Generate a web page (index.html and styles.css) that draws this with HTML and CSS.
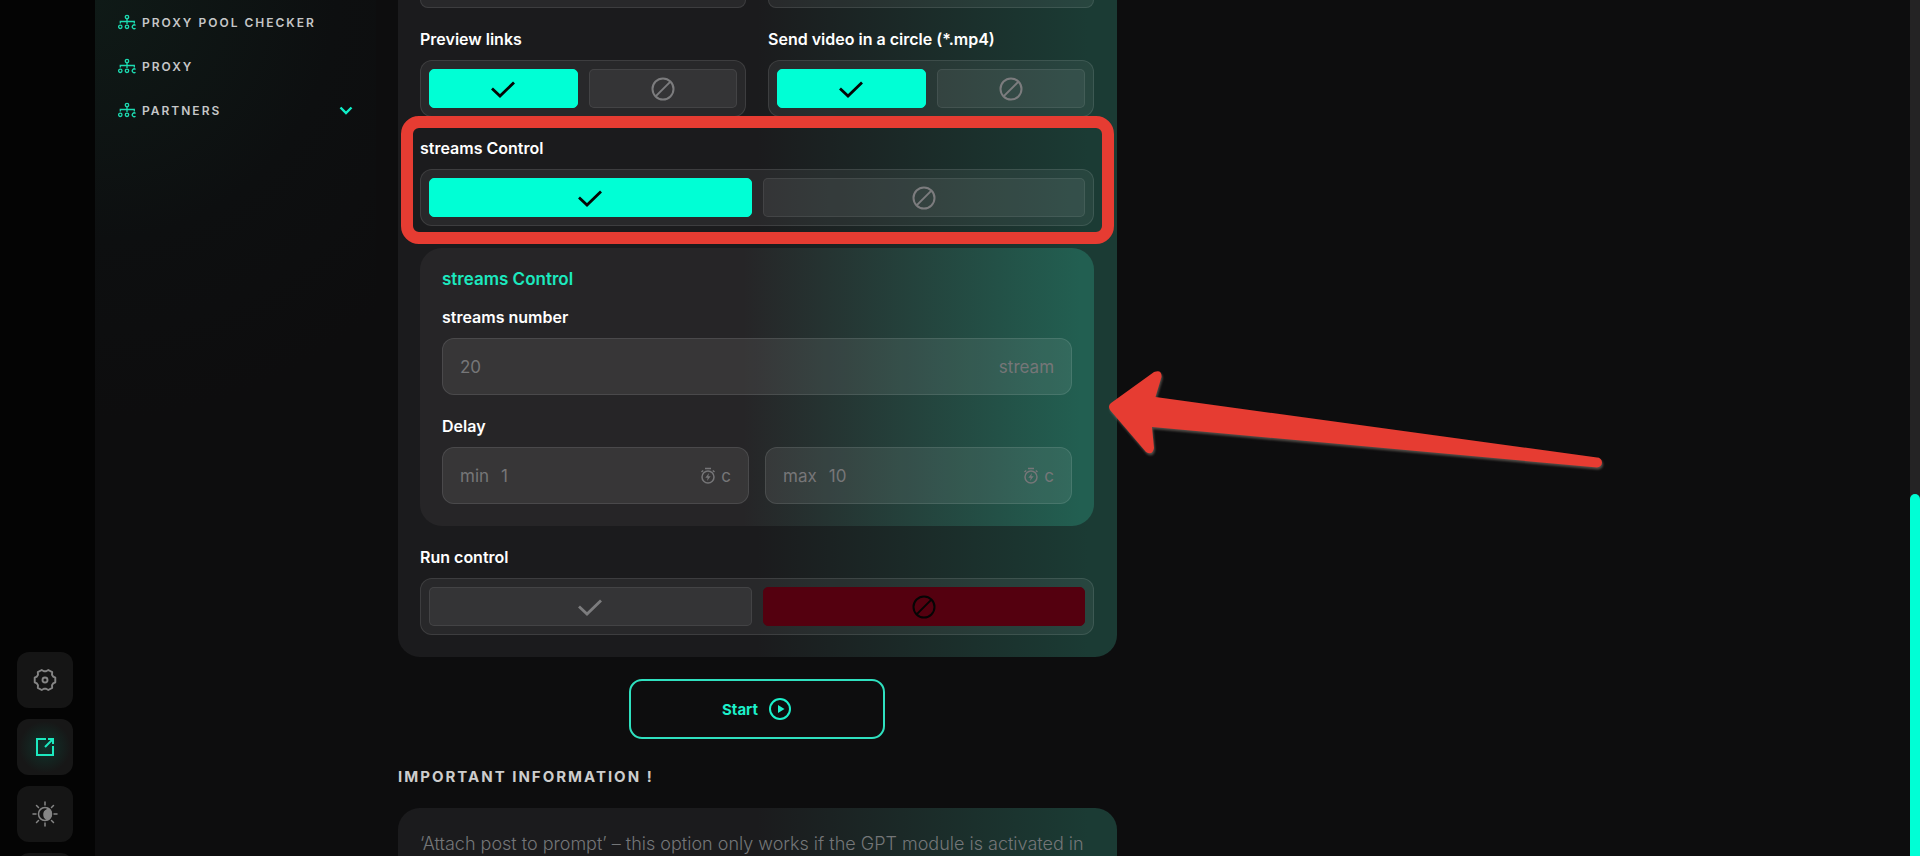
FILE: index.html
```html
<!DOCTYPE html>
<html lang="en">
<head>
<meta charset="utf-8">
<title>Streams Control</title>
<link rel="stylesheet" href="styles.css">
</head>
<body>
<svg class="sprite" aria-hidden="true">
  <symbol id="check" viewBox="0 0 24 24"><path d="M1 11.500l8 7.500L23 5.500" fill="none" stroke="currentColor" stroke-width="2.800"/></symbol>
  <symbol id="ban" viewBox="0 0 24 24"><g fill="none" stroke="currentColor" stroke-width="2"><circle cx="12" cy="12" r="10.500"/><path d="M4.600 19.400L19.400 4.600"/></g></symbol>
  <symbol id="tree" viewBox="0 0 18 16"><g fill="none" stroke="currentColor" stroke-width="1.300"><circle cx="9" cy="3" r="1.700"/><path d="M9 4.700V10M2.300 9.500V7.500h14V9.500"/><circle cx="2.300" cy="12.800" r="1.700"/><circle cx="9" cy="12.800" r="1.700"/><path d="M17.500 11.400a1.900 1.900 0 1 0 0 2.800"/></g></symbol>
  <symbol id="timer" viewBox="0 0 16 18"><g fill="none" stroke="currentColor" stroke-width="1.500"><circle cx="8" cy="10" r="6"/><path d="M5 1.500h6M1.500 5l1.700-1.500M14.500 5l-1.700-1.500"/></g><path d="M9 6L5.300 10.800h2.400L7 14l3.700-4.800H8.300z" fill="currentColor"/></symbol>
</svg>
<div class="app">
  <nav class="rail" aria-label="Tools">
    <button class="rail-button" aria-label="Settings"><svg width="24" height="24" viewBox="0 0 24 24" fill="none" stroke="currentColor" stroke-width="1.900" stroke-linejoin="round"><path d="M22.300 9.700V14.300L20.100 15.400L19 17.300L19.200 19.900L15.300 22L13.100 20.700H10.900L8.700 22L4.800 19.900L5 17.300L3.900 15.400L1.700 14.300V9.700L3.900 8.600L5 6.700L4.800 4.100L8.700 2L10.900 3.300H13.100L15.300 2L19.200 4.100L19 6.700L20.100 8.600z"/><circle cx="12" cy="12" r="2.500"/></svg></button>
    <button class="rail-button rail-active" aria-label="Open external"><svg width="20" height="20" viewBox="0 0 20 20" fill="none" stroke="currentColor" stroke-width="2"><path d="M11 2H2v16h16V9M13 2h5v5M18 2l-8 8"/></svg></button>
    <button class="rail-button" aria-label="Theme"><svg width="26" height="26" viewBox="0 0 26 26" fill="none" stroke="currentColor" stroke-width="1.500" stroke-linecap="round"><circle cx="13" cy="13" r="6.500"/><path d="M16 7.500a6.500 6.500 0 0 1 0 11a5 5 0 0 1-1-9.500z" fill="currentColor"/><path d="M13 1v3M13 22v3M1 13h3M22 13h3M4.500 4.500l2 2M19.500 19.500l2 2M4.500 21.500l2-2M19.500 6.500l2-2"/></svg></button>
    <button class="rail-button" aria-label="More"></button>
  </nav>
  <nav class="sidebar" aria-label="Main">
    <a class="nav-link" href="#pool"><svg width="18" height="16"><use href="#tree"/></svg>PROXY POOL CHECKER</a>
    <a class="nav-link" href="#proxy"><svg width="18" height="16"><use href="#tree"/></svg>PROXY</a>
    <a class="nav-link" href="#partners"><svg width="18" height="16"><use href="#tree"/></svg>PARTNERS<svg class="chevron" width="14" height="9" viewBox="0 0 14 9"><path d="M1.500 1.500L7 7l5.500-5.500" fill="none" stroke="currentColor" stroke-width="2.400"/></svg></a>
  </nav>
  <main class="main">
    <form class="column">
      <div class="card settings">
        <div class="pair">
          <div class="stub"></div>
          <div class="stub"></div>
        </div>
        <div class="pair">
          <div class="field" role="group" aria-labelledby="preview-label">
            <div class="label" id="preview-label">Preview links</div>
            <div class="toggle">
              <label class="option"><input type="radio" name="preview" aria-label="On" checked><svg><use href="#check"/></svg></label>
              <label class="option option-off"><input type="radio" name="preview" aria-label="Off"><svg><use href="#ban"/></svg></label>
            </div>
          </div>
          <div class="field" role="group" aria-labelledby="circle-label">
            <div class="label" id="circle-label">Send video in a circle (*.mp4)</div>
            <div class="toggle">
              <label class="option"><input type="radio" name="circle" aria-label="On" checked><svg><use href="#check"/></svg></label>
              <label class="option option-off"><input type="radio" name="circle" aria-label="Off"><svg><use href="#ban"/></svg></label>
            </div>
          </div>
        </div>
        <div class="field marked" role="group" aria-labelledby="streams-label">
          <div class="label" id="streams-label">streams Control</div>
          <div class="toggle">
            <label class="option"><input type="radio" name="streams" aria-label="On" checked><svg><use href="#check"/></svg></label>
            <label class="option option-off"><input type="radio" name="streams" aria-label="Off"><svg><use href="#ban"/></svg></label>
          </div>
        </div>
        <section class="panel">
          <h3 class="panel-title">streams Control</h3>
          <div class="field">
            <label class="label" for="count">streams number</label>
            <div class="input-box">
              <input class="input" id="count" placeholder="20">
              <span class="unit">stream</span>
            </div>
          </div>
          <div class="field" role="group" aria-labelledby="delay-label">
            <div class="label" id="delay-label">Delay</div>
            <div class="delay">
              <div class="input-box">
                <label for="min">min</label>
                <input class="input" id="min" placeholder="1">
                <span class="unit"><svg width="16" height="18"><use href="#timer"/></svg>c</span>
              </div>
              <div class="input-box">
                <label for="max">max</label>
                <input class="input" id="max" placeholder="10">
                <span class="unit"><svg width="16" height="18"><use href="#timer"/></svg>c</span>
              </div>
            </div>
          </div>
          <svg class="arrow" width="500" height="104" viewBox="1108 370 500 104" aria-hidden="true"><path d="M1112 405L1155 374Q1163 371 1162.500 379L1156.500 399L1598 459.500A5 5 0 0 1 1598 469.500L1153 429L1155 450Q1153.500 458 1147 454L1111 412Q1108.500 408 1112 405z"/></svg>
        </section>
        <div class="field" role="group" aria-labelledby="run-label">
          <div class="label" id="run-label">Run control</div>
          <div class="toggle">
            <label class="option"><input type="radio" name="run" aria-label="On"><svg><use href="#check"/></svg></label>
            <label class="option option-off"><input type="radio" name="run" aria-label="Off" checked><svg><use href="#ban"/></svg></label>
          </div>
        </div>
      </div>
      <button class="start" type="button">Start<svg width="22" height="22" viewBox="0 0 22 22"><circle cx="11" cy="11" r="10" fill="none" stroke="currentColor" stroke-width="2"/><path d="M9 7l6.500 4L9 15z" fill="currentColor"/></svg></button>
      <h2 class="heading">IMPORTANT INFORMATION !</h2>
      <div class="card info">
        <p>‘Attach post to prompt’ – this option only works if the GPT module is activated in</p>
      </div>
    </form>
  </main>
  <div class="scrollbar"><div class="thumb"></div></div>
</div>
</body>
</html>
```
FILE: styles.css
```css
* { box-sizing: border-box; }

body {
  margin: 0;
  height: 100vh;
  overflow: hidden;
  background: #0d0d0e;
  color: #fff;
  font-family: Inter, "Open Sans", sans-serif;
  font-size: 16px;
}

h2, h3, p { margin: 0; }

button, input { font: inherit; }

svg { flex: none; display: block; }

.sprite { display: none; }

.app {
  display: flex;
  height: 100vh;
  overflow: hidden;
}

.rail {
  width: 95px;
  flex: none;
  background: #040404;
  display: flex;
  flex-direction: column;
  justify-content: flex-end;
  gap: 11px;
  padding: 0 22px 0 17px;
}

.rail-button {
  width: 56px;
  height: 56px;
  flex: none;
  padding: 0 1px 0 0;
  border: 0;
  border-radius: 12px;
  background: #151515;
  color: #858585;
  display: grid;
  place-items: center;
}

.rail-button:last-child { margin-bottom: -53px; }

.rail-active {
  color: #1ce9bf;
  background: radial-gradient(circle, #10332b, #171717 65%);
}

.sidebar {
  width: 281px;
  flex: none;
  padding: 0 23px;
  background: radial-gradient(circle at 0 0, #0f1a17, #0d0f10 240px, #0d0d0e 420px);
}

.nav-link {
  display: flex;
  align-items: center;
  gap: 6px;
  height: 44px;
  color: #c6c7c8;
  font-size: 12px;
  font-weight: 600;
  letter-spacing: 2px;
  text-decoration: none;
}

.nav-link svg { color: #1cdcb2; }

.nav-link .chevron {
  margin-left: auto;
  color: #0fefc8;
}

.main {
  flex: 1;
  min-width: 0;
  padding: 0 14px 0 22px;
}

.column {
  width: 48%;
  display: flex;
  flex-direction: column;
}

.card {
  background: linear-gradient(90deg, #1b1b1d 50%, #1b3b34 96%);
  padding: 22px 23px 22px 22px;
}

.settings {
  display: flex;
  flex-direction: column;
  gap: 22px;
  padding-top: 0;
  border-radius: 0 0 22px 22px;
}

.pair {
  display: grid;
  grid-template-columns: 1fr 1fr;
  gap: 22px;
}

.stub {
  height: 8px;
  border: 1px solid rgba(255, 255, 255, .1);
  border-top: 0;
  border-radius: 0 0 12px 12px;
  background: rgba(255, 255, 255, .06);
}

.field {
  display: flex;
  flex-direction: column;
  gap: 12px;
}

.label {
  font-weight: 600;
  line-height: 18px;
}

.toggle {
  display: flex;
  gap: 11px;
  padding: 8px;
  border: 1px solid rgba(255, 255, 255, .1);
  border-radius: 12px;
  background: rgba(255, 255, 255, .06);
}

.option {
  position: relative;
  flex: 1;
  height: 39px;
  display: grid;
  place-items: center;
  border: 1px solid rgba(255, 255, 255, .08);
  border-radius: 5px;
  background: rgba(255, 255, 255, .06);
  color: #7c7c7e;
}

.option svg {
  width: 24px;
  height: 24px;
}

.option input {
  position: absolute;
  inset: 0;
  margin: 0;
  opacity: 0;
}

.option:has(:checked) {
  background: #00ffd5;
  border-color: #00ffd5;
  color: #050505;
}

.option-off:has(:checked) {
  background: #54000f;
  border-color: #54000f;
}

.marked { position: relative; }

.marked::after {
  content: "";
  position: absolute;
  inset: -23px -20px -18px -19px;
  border: 12px solid #e63c32;
  border-radius: 18px;
  pointer-events: none;
}

.panel {
  position: relative;
  display: flex;
  flex-direction: column;
  gap: 22px;
  padding: 22px;
  border-radius: 22px;
  background: linear-gradient(90deg, #262527 48%, #225f51 98%);
}

.panel-title {
  margin-bottom: -2px;
  color: #1ce9bf;
  font-size: 17px;
  font-weight: 600;
  line-height: 18px;
}

.input-box {
  display: flex;
  align-items: center;
  gap: 12px;
  min-width: 0;
  height: 57px;
  padding: 0 17px;
  border: 1px solid rgba(255, 255, 255, .1);
  border-radius: 12px;
  background: rgba(255, 255, 255, .08);
  color: #767678;
  font-size: 17px;
}

.input {
  flex: 1;
  width: 0;
  min-width: 0;
  padding: 0;
  border: 0;
  outline: 0;
  background: none;
  color: inherit;
}

.input::placeholder { color: inherit; opacity: 1; }

.unit {
  display: flex;
  align-items: center;
  gap: 5px;
}

.delay {
  display: grid;
  grid-template-columns: 1fr 1fr;
  gap: 16px;
}

.arrow {
  position: absolute;
  left: calc(100% + 13px);
  top: 120px;
  fill: #e63c32;
  filter: drop-shadow(1px 2px 1px rgba(150, 140, 130, .5));
}

.start {
  align-self: center;
  display: flex;
  align-items: center;
  justify-content: center;
  gap: 11px;
  width: 256px;
  height: 60px;
  margin: 22px 2px 0 0;
  border: 2px solid #2fe0bf;
  border-radius: 13px;
  background: transparent;
  color: #1cf0ca;
  font-size: 15px;
  font-weight: 700;
}

.heading {
  margin: 28px 0 21px;
  color: #cdcdcd;
  font-size: 15px;
  font-weight: 700;
  line-height: 20px;
  letter-spacing: 2px;
}

.info {
  border-radius: 22px;
  color: #747678;
  font-size: 18px;
  font-weight: 300;
  line-height: 28px;
  white-space: nowrap;
}

.scrollbar {
  width: 10px;
  flex: none;
  display: grid;
  grid-template-rows: 494fr 362fr;
  background: #242324;
}

.thumb {
  grid-row: 2;
  border-radius: 5px 5px 0 0;
  background: #00ffd5;
}
```
